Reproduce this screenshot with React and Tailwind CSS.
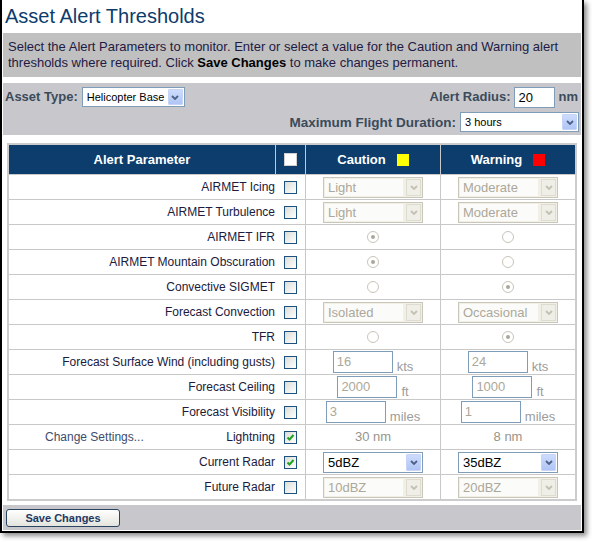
import React from 'react';

const Chevron = ({ color }) => (
  <svg width="8" height="5" viewBox="0 0 8 5">
    <path d="M1 1 L4 4 L7 1" stroke={color} strokeWidth="1.8" fill="none" />
  </svg>
);

// XP style drop-down, drawn with divs
const Select = ({ value, className = '', disabled, small }) => {
  if (disabled) {
    return (
      <div className={`flex whitespace-nowrap border border-[#c9c7ba] bg-[#f1efe6] p-px font-normal ${className}`}>
        <div className="flex-1 bg-[#fbfbf9] pl-[3px] text-[13px] leading-[17px] text-[#aca899]">{value}</div>
        <div className="ml-[3px] flex w-[15px] items-center justify-center border border-[#dedbd0] bg-[#efeee7]">
          <Chevron color="#c4c1b3" />
        </div>
      </div>
    );
  }
  return (
    <div className={`flex whitespace-nowrap border border-[#7f9db9] bg-white p-px font-normal ${className}`}>
      <div
        className={`flex-1 pl-[3px] text-black ${small ? 'text-[11px] leading-[16px]' : 'text-[13px] leading-[17px]'}`}
      >
        {value}
      </div>
      <div className="flex w-[15px] items-center justify-center rounded-[1px] border border-[#c6d5f7] bg-gradient-to-b from-[#cddcfd] to-[#b0c5f6]">
        <Chevron color="#4d6185" />
      </div>
    </div>
  );
};

const Check = ({ checked }) => (
  <span className="flex h-[13px] w-[13px] items-center justify-center border border-[#1c5180] bg-gradient-to-br from-[#dcdcd7] to-white">
    {checked && (
      <svg width="9" height="9" viewBox="0 0 9 9">
        <path d="M1.5 4.5 L3.5 6.5 L7.5 2" stroke="#21a121" strokeWidth="2" fill="none" />
      </svg>
    )}
  </span>
);

const Radio = ({ on }) => (
  <span className="flex h-[12px] w-[12px] items-center justify-center rounded-full border border-[#c7c4b8] bg-white">
    {on && <span className="h-[4px] w-[4px] rounded-full bg-[#aaa79b]" />}
  </span>
);

const Field = ({ value, unit }) => (
  <div className="flex items-end gap-[4px]">
    <div className="h-[22px] w-[60px] border border-[#7f9db9] bg-white pl-[3px] pt-[2px] text-[13px] leading-[15px] text-[#aca899]">
      {value}
    </div>
    <span className="text-[13px] leading-none text-[#9c9c9c]">{unit}</span>
  </div>
);

const rows = [
  { label: 'AIRMET Icing', c: { t: 'sel', v: 'Light' }, w: { t: 'sel', v: 'Moderate' } },
  { label: 'AIRMET Turbulence', c: { t: 'sel', v: 'Light' }, w: { t: 'sel', v: 'Moderate' } },
  { label: 'AIRMET IFR', c: { t: 'radio', on: true }, w: { t: 'radio' } },
  { label: 'AIRMET Mountain Obscuration', c: { t: 'radio', on: true }, w: { t: 'radio' } },
  { label: 'Convective SIGMET', c: { t: 'radio' }, w: { t: 'radio', on: true } },
  { label: 'Forecast Convection', c: { t: 'sel', v: 'Isolated' }, w: { t: 'sel', v: 'Occasional' } },
  { label: 'TFR', c: { t: 'radio' }, w: { t: 'radio', on: true } },
  {
    label: 'Forecast Surface Wind (including gusts)',
    c: { t: 'field', v: '16', u: 'kts' },
    w: { t: 'field', v: '24', u: 'kts' },
  },
  { label: 'Forecast Ceiling', c: { t: 'field', v: '2000', u: 'ft' }, w: { t: 'field', v: '1000', u: 'ft' } },
  { label: 'Forecast Visibility', c: { t: 'field', v: '3', u: 'miles' }, w: { t: 'field', v: '1', u: 'miles' } },
  { label: 'Lightning', checked: true, link: true, c: { t: 'text', v: '30 nm' }, w: { t: 'text', v: '8 nm' } },
  { label: 'Current Radar', checked: true, c: { t: 'sel', v: '5dBZ', on: true }, w: { t: 'sel', v: '35dBZ', on: true } },
  { label: 'Future Radar', c: { t: 'sel', v: '10dBZ' }, w: { t: 'sel', v: '20dBZ' } },
];

const Cell = ({ d }) => {
  if (d.t === 'sel') return <Select value={d.v} disabled={!d.on} className="h-[21px] w-[100px]" />;
  if (d.t === 'radio') return <Radio on={d.on} />;
  if (d.t === 'field') return <Field value={d.v} unit={d.u} />;
  return <span className="text-[13px] text-[#97948a]">{d.v}</span>;
};

export default function App() {
  return (
    <div className="h-[542px] w-[592px] overflow-hidden bg-white font-['Liberation_Sans',Arial,sans-serif]">
      <div className="w-[584px] border-x-2 border-b-2 border-black bg-white px-px pb-px shadow-[3px_3px_5px_rgba(0,0,0,0.45)]">
        <div className="h-[33px] pl-[2px] pt-[4px] text-[20px] leading-[24px] text-[#0c3c6c]">Asset Alert Thresholds</div>

        <div className="bg-[#c0c0c0] pb-[6px] pl-[5px] pt-[6px] text-[13px] leading-[16px] text-[#221a44]">
          Select the Alert Parameters to monitor. Enter or select a value for the Caution and Warning alert
          <br />
          thresholds where required. Click <b className="text-black">Save Changes</b> to make changes permanent.
        </div>

        <div className="mt-[6px] h-[52px] bg-[#c8c8cc] pt-[3px] text-[13px] font-bold text-[#3b4b5b]">
          <div className="flex h-[22px] items-center justify-between pl-[2px] pr-[3px]">
            <div className="flex items-center">
              <span>Asset Type:</span>
              <Select value="Helicopter Base" small className="ml-[4px] h-[20px] w-[103px]" />
            </div>
            <div className="flex items-center">
              <span>Alert Radius:</span>
              <div className="ml-[3px] h-[21px] w-[41px] border border-[#7f9db9] bg-white pl-[4px] text-[13px] font-normal leading-[19px] text-black">
                20
              </div>
              <span className="ml-[4px]">nm</span>
            </div>
          </div>
          <div className="mt-[4px] flex h-[20px] items-center justify-end pr-[2px]">
            <span className="mt-[2px] text-[13.5px]">Maximum Flight Duration:</span>
            <Select value="3 hours" small className="ml-[4px] h-[20px] w-[119px]" />
          </div>
        </div>

        <div className="ml-[4px] mt-[8px] w-[570px] border-2 border-[#cccccc] bg-white text-[12px] text-[#201a3c]">
          <div className="flex h-[30px] border-b border-[#c8c8c8] bg-[#0c3d6c] text-[13px] font-bold text-white">
            <div className="flex w-[267px] items-center justify-center border-r border-[#c8c8c8]">Alert Parameter</div>
            <div className="flex w-[30px] items-center justify-center border-r border-[#c8c8c8]">
              <span className="h-[13px] w-[13px] border border-[#d0d0d0] bg-white" />
            </div>
            <div className="flex w-[135px] items-center justify-center gap-[11px] border-r border-[#c8c8c8]">
              <span>Caution</span>
              <span className="h-[12px] w-[12px] bg-[#ffff00]" />
            </div>
            <div className="flex flex-1 items-center justify-center gap-[11px]">
              <span>Warning</span>
              <span className="h-[12px] w-[12px] bg-[#ff0000]" />
            </div>
          </div>

          {rows.map((r, i) => (
            <div
              key={r.label}
              className={`flex ${i === rows.length - 1 ? 'h-[24px]' : 'h-[25px] border-b border-[#c8c8c8]'}`}
            >
              <div className="flex w-[297px] items-center border-r border-[#c8c8c8] pr-[8px]">
                {r.link && <span className="ml-[36px] text-[#3d4c6c]">Change Settings...</span>}
                <span className="ml-auto">{r.label}</span>
                <span className="ml-[9px]">
                  <Check checked={r.checked} />
                </span>
              </div>
              <div className="flex w-[135px] items-center justify-center border-r border-[#c8c8c8]">
                <Cell d={r.c} />
              </div>
              <div className="flex flex-1 items-center justify-center">
                <Cell d={r.w} />
              </div>
            </div>
          ))}
        </div>

        <div className="mt-[4px] h-[25px] bg-[#c8c8cc] pl-[3px] pt-[4px]">
          <button className="flex h-[18px] w-[114px] items-center justify-center rounded-[3px] border border-[#2a4462] bg-gradient-to-b from-white to-[#e4e4de] text-[11px] font-bold text-[#1c3a63]">
            Save Changes
          </button>
        </div>
      </div>
    </div>
  );
}
